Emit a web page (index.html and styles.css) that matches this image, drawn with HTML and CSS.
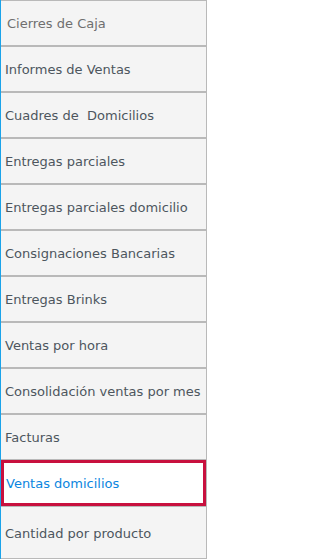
FILE: index.html
```html
<!DOCTYPE html>
<html lang="es">
<head>
<meta charset="utf-8">
<title>Menú</title>
<link rel="stylesheet" href="styles.css">
</head>
<body>
<nav class="menu">
  <a class="item item-first">Cierres de Caja</a>
  <a class="item">Informes de Ventas</a>
  <a class="item">Cuadres de&nbsp; Domicilios</a>
  <a class="item">Entregas parciales</a>
  <a class="item">Entregas parciales domicilio</a>
  <a class="item">Consignaciones Bancarias</a>
  <a class="item">Entregas Brinks</a>
  <a class="item">Ventas por hora</a>
  <a class="item">Consolidación ventas por mes</a>
  <a class="item">Facturas</a>
  <a class="item item-active">Ventas domicilios</a>
  <a class="item item-last">Cantidad por producto</a>
</nav>
</body>
</html>
```
FILE: styles.css
```css
html, body {
  margin: 0;
  padding: 0;
  background: #ffffff;
}
.menu {
  width: 207px;
  box-sizing: border-box;
  display: flex;
  flex-direction: column;
  border-left: 1px solid #1aa3ea;
  border-right: 1px solid #b9b9b9;
  background: #f4f4f4;
  font-family: "DejaVu Sans", Verdana, sans-serif;
  font-size: 13px;
}
.item {
  display: flex;
  align-items: center;
  height: 46px;
  box-sizing: border-box;
  padding-left: 4px;
  border-top: 1px solid #b9b9b9;
  border-bottom: 1px solid #b9b9b9;
  color: #4d565e;
  background: #f4f4f4;
  white-space: nowrap;
}
.item-first {
  padding-left: 6px;
  color: #6f6f6f;
}
.item-active {
  background: #ffffff;
  color: #0b86e0;
  border: 3px solid #c8103e;
  padding-left: 2px;
}
.item-last {
  height: 53px;
  padding-top: 1px;
}
```
